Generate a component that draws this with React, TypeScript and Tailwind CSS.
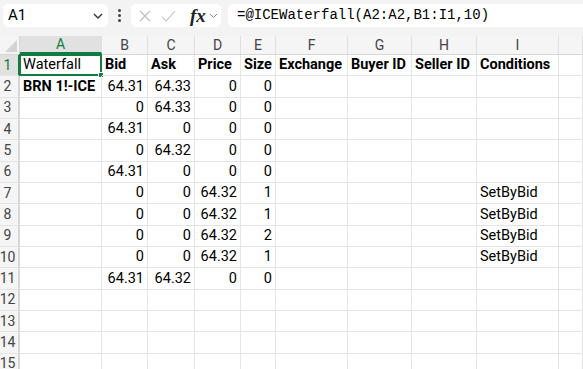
const cols = [
  { key: "A", w: "w-[82px]" },
  { key: "B", w: "w-[46px]" },
  { key: "C", w: "w-[47px]" },
  { key: "D", w: "w-[46px]" },
  { key: "E", w: "w-[35px]" },
  { key: "F", w: "w-[72px]" },
  { key: "G", w: "w-[64px]" },
  { key: "H", w: "w-[65px]" },
  { key: "I", w: "w-[82px]" },
  { key: "J", w: "flex-1" },
];

type Cell = { v: string; bold?: boolean; num?: boolean };

const t = (v: string, bold = false): Cell => ({ v, bold });
const n = (v: string): Cell => ({ v, num: true });
const e: Cell = { v: "" };

const rows: Cell[][] = [
  [t("Waterfall"), t("Bid", true), t("Ask", true), t("Price", true), t("Size", true), t("Exchange", true), t("Buyer ID", true), t("Seller ID", true), t("Conditions", true), e],
  [t("BRN 1!-ICE", true), n("64.31"), n("64.33"), n("0"), n("0"), e, e, e, e, e],
  [e, n("0"), n("64.33"), n("0"), n("0"), e, e, e, e, e],
  [e, n("64.31"), n("0"), n("0"), n("0"), e, e, e, e, e],
  [e, n("0"), n("64.32"), n("0"), n("0"), e, e, e, e, e],
  [e, n("64.31"), n("0"), n("0"), n("0"), e, e, e, e, e],
  [e, n("0"), n("0"), n("64.32"), n("1"), e, e, e, t("SetByBid"), e],
  [e, n("0"), n("0"), n("64.32"), n("1"), e, e, e, t("SetByBid"), e],
  [e, n("0"), n("0"), n("64.32"), n("2"), e, e, e, t("SetByBid"), e],
  [e, n("0"), n("0"), n("64.32"), n("1"), e, e, e, t("SetByBid"), e],
  [e, n("64.31"), n("64.32"), n("0"), n("0"), e, e, e, e, e],
  [e, e, e, e, e, e, e, e, e, e],
  [e, e, e, e, e, e, e, e, e, e],
  [e, e, e, e, e, e, e, e, e, e],
  [e, e, e, e, e, e, e, e, e, e],
];

export default function App() {
  return (
    <div
      className="w-[583px] h-[369px] overflow-hidden bg-white text-black"
      style={{ fontFamily: "Roboto, 'Liberation Sans', sans-serif" }}
    >
      {/* Formula bar */}
      <div className="h-[36px] bg-[#f3f3f3] flex items-start pt-[4px] pl-[3px]">
        <div className="w-[105px] h-[23px] bg-white rounded-[5px] flex items-center justify-between pl-[5px] pr-[4px] text-[15px]">
          <span>A1</span>
          <svg width="12" height="12" viewBox="0 0 12 12" fill="none" stroke="#333" strokeWidth="1.4">
            <path d="M2 4l4 4 4-4" />
          </svg>
        </div>
        <div className="w-[23px] h-[23px] flex flex-col items-center justify-center gap-[2px]">
          <div className="w-[3px] h-[3px] rounded-full bg-[#444]" />
          <div className="w-[3px] h-[3px] rounded-full bg-[#444]" />
          <div className="w-[3px] h-[3px] rounded-full bg-[#444]" />
        </div>
        <div className="w-[90px] h-[23px] bg-white rounded-[5px] flex items-center pl-[8px]">
          <svg width="12" height="12" viewBox="0 0 12 12" fill="none" stroke="#bdbdbd" strokeWidth="1.1">
            <path d="M1 1l10 10M11 1L1 11" />
          </svg>
          <svg className="ml-[10px]" width="15" height="12" viewBox="0 0 15 12" fill="none" stroke="#bdbdbd" strokeWidth="1.1">
            <path d="M1 6.5l4 4.5L14 1" />
          </svg>
          <span
            className="ml-[14px] text-[19px] italic font-bold text-[#222] leading-none"
            style={{ fontFamily: "'Liberation Serif', serif" }}
          >
            fx
          </span>
          <svg className="ml-[3px]" width="9" height="9" viewBox="0 0 9 9" fill="none" stroke="#888" strokeWidth="1">
            <path d="M1 3l3.5 3.5L8 3" />
          </svg>
        </div>
        <div
          className="ml-[7px] flex-1 h-[23px] bg-white rounded-l-[5px] flex items-center pl-[9px] text-[14px] text-black"
          style={{ fontFamily: "'Liberation Mono', monospace" }}
        >
          =@ICEWaterfall(A2:A2,B1:I1,10)
        </div>
      </div>

      {/* Column headers */}
      <div className="flex h-[19px] bg-[#f5f5f5] border-b border-[#d6d6d6] text-[14px] text-[#444]">
        <div className="w-[20px] relative border-r border-[#d6d6d6]">
          <div className="absolute right-[2px] bottom-[2px] w-0 h-0 border-l-[12px] border-l-transparent border-b-[12px] border-b-[#d4d4d4]" />
        </div>
        {cols.map((c) => (
          <div
            key={c.key}
            className={`${c.w} shrink-0 flex items-center justify-center border-r border-[#e0e0e0] ${
              c.key === "A" ? "bg-[#e1e1e1] text-[#107c41] border-b-2 border-b-[#107c41]" : ""
            }`}
          >
            {c.key === "J" ? "" : c.key}
          </div>
        ))}
      </div>

      {/* Rows */}
      {rows.map((r, ri) => (
        <div key={ri} className="flex h-[21.33px]">
          <div
            className={`w-[20px] shrink-0 flex items-center justify-center pr-[3px] text-[14px] border-r-2 border-b border-b-[#e4e4e4] ${
              ri === 0 ? "bg-[#e1e1e1] text-[#107c41] border-r-[#107c41]" : "bg-[#f5f5f5] text-[#444] border-r-[#d6d6d6]"
            }`}
          >
            {ri + 1}
          </div>
          {r.map((cell, ci) => (
            <div
              key={ci}
              className={`${cols[ci].w} shrink-0 relative flex items-center px-[3px] text-[14.5px] whitespace-nowrap border-r border-b border-[#e4e4e4] ${
                cell.num ? "justify-end" : "justify-start"
              } ${cell.bold ? "font-bold" : ""}`}
            >
              {cell.v}
              {ri === 0 && ci === 0 && (
                <div className="absolute -left-[1px] -top-[1px] -right-[1px] -bottom-[1px] border-2 border-[#107c41]">
                  <div className="absolute -right-[4px] -bottom-[4px] w-[6px] h-[6px] bg-[#107c41] border border-white" />
                </div>
              )}
            </div>
          ))}
        </div>
      ))}
    </div>
  );
}
